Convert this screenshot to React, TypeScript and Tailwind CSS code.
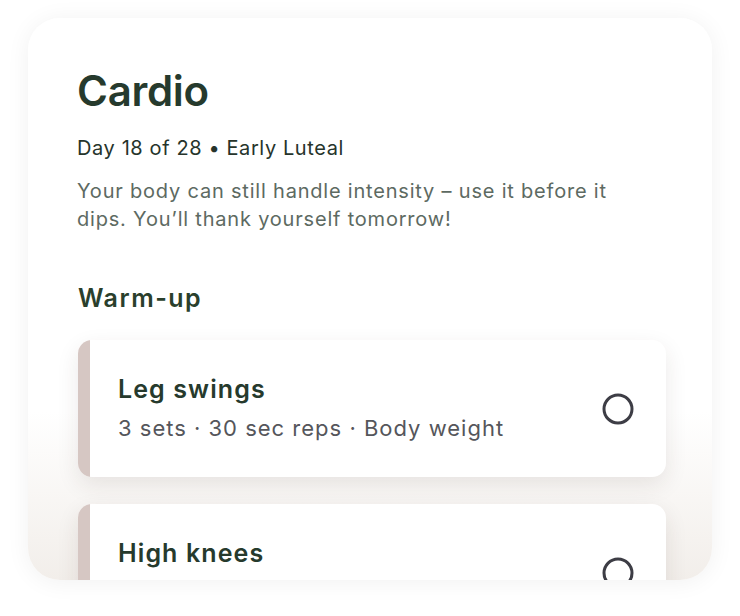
import React from "react";

type Exercise = { name: string; detail: string };

const warmUp: Exercise[] = [
  { name: "Leg swings", detail: "3 sets · 30 sec reps · Body weight" },
  { name: "High knees", detail: "3 sets · 30 sec reps · Body weight" },
];

function CheckCircle() {
  return (
    <svg width="34" height="34" viewBox="0 0 34 34" className="shrink-0">
      <circle cx="17" cy="17" r="14" fill="none" stroke="#3d3d45" strokeWidth="3" />
    </svg>
  );
}

function ExerciseCard({ item }: { item: Exercise }) {
  return (
    <div className="flex h-[137px] shrink-0 overflow-hidden rounded-[14px] bg-white shadow-[0_8px_22px_rgba(60,40,30,0.10)]">
      <div className="w-[12px] shrink-0 bg-[#d6c7c3]" />
      <div className="flex flex-1 items-center justify-between pl-[28px] pr-[31px]">
        <div className="flex flex-col pb-[3px]">
          <div className="text-[25px] font-semibold leading-[32px] tracking-[1.1px] text-[#263a2d]">{item.name}</div>
          <div className="mt-[9px] text-[22px] leading-[28px] tracking-[1px] text-[#55565b]">{item.detail}</div>
        </div>
        <CheckCircle />
      </div>
    </div>
  );
}

export default function App() {
  return (
    <div
      className="h-[616px] w-[740px] bg-white px-[28px] pt-[18px]"
      style={{ fontFamily: "Inter, 'Noto Sans', sans-serif" }}
    >
      <div className="flex h-[562px] flex-col overflow-hidden rounded-[32px] bg-gradient-to-b from-white from-[70%] to-[#f2eeea] pl-[49px] pr-[46px] pt-[49px] shadow-[0_2px_24px_rgba(0,0,0,0.06)]">
        <h1 className="text-[42px] font-semibold leading-[48px] tracking-[-0.3px] text-[#263a2d]">Cardio</h1>
        <div className="mt-[19px] text-[20px] leading-[28px] tracking-[0.6px] text-[#26342b]">Day 18 of 28 • Early Luteal</div>
        <p className="mt-[15px] w-[570px] text-[20px] leading-[28px] tracking-[0.8px] text-[#5d6a62]">
          Your body can still handle intensity – use it before it dips. You’ll thank yourself tomorrow!
        </p>
        <h2 className="ml-[1px] mt-[49px] text-[25px] font-semibold leading-[32px] tracking-[1.5px] text-[#2a3f2c]">Warm-up</h2>
        <div className="ml-[1px] mt-[26px] flex flex-col gap-[27px]">
          {warmUp.map((e) => (
            <ExerciseCard key={e.name} item={e} />
          ))}
        </div>
      </div>
    </div>
  );
}
